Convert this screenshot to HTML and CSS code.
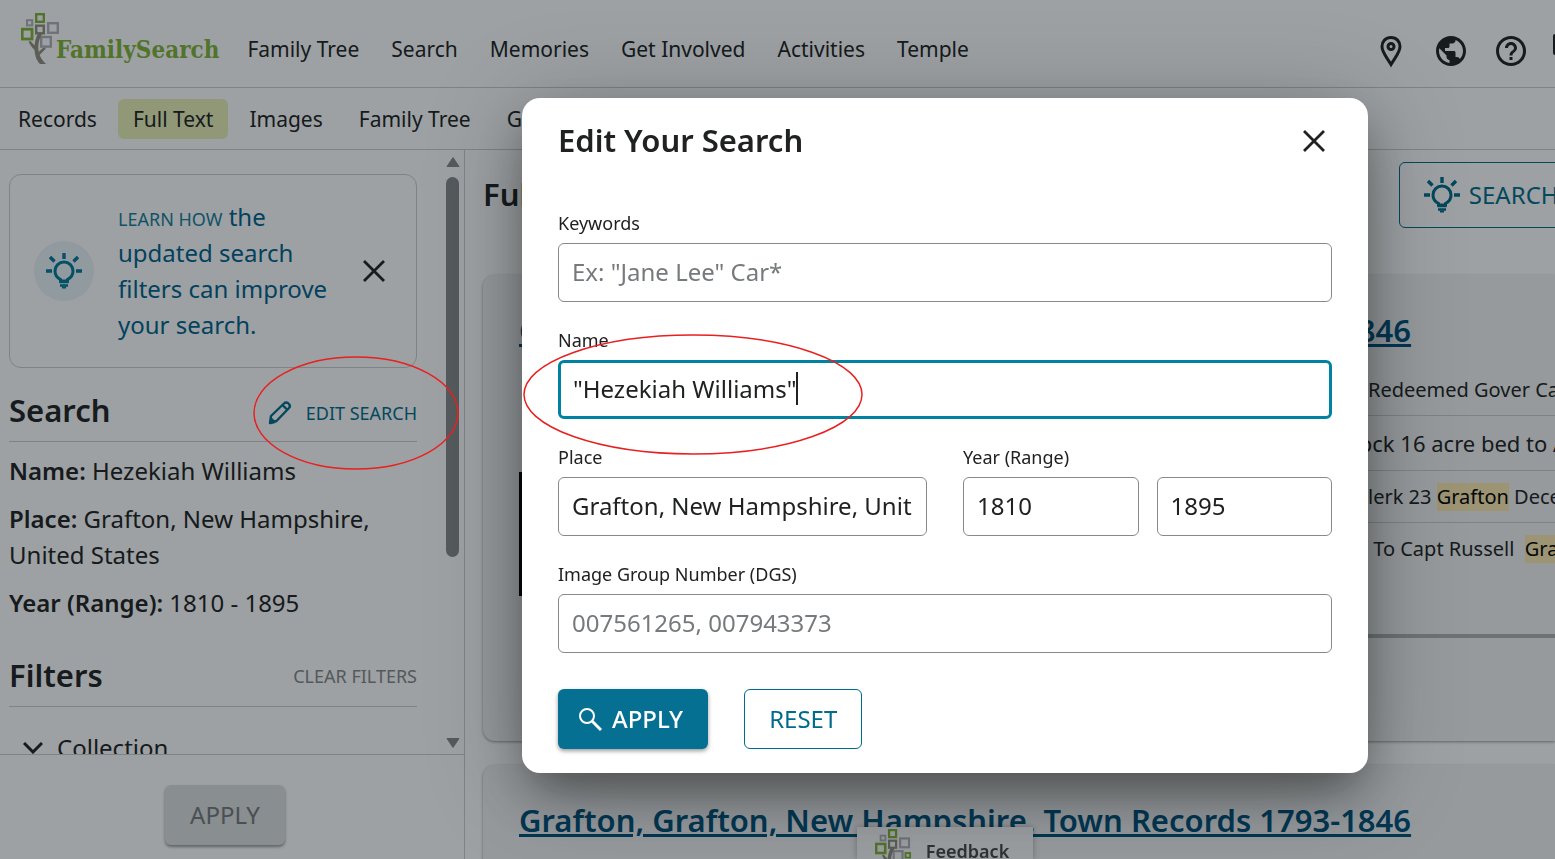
FILE: index.html
```html
<!DOCTYPE html>
<html lang="en">
<head>
  <meta charset="UTF-8">
  <meta name="viewport" content="width=device-width, initial-scale=1.0">
  <title>Full Text Search - FamilySearch</title>
  <link rel="stylesheet" href="styles.css">
</head>
<body>
  <!-- shared icons -->
  <svg class="sprite" aria-hidden="true">
    <symbol id="icon-tree" viewBox="0 0 40 52">
      <g fill="none" stroke-width="2.400">
        <rect x="15.200" y="1.200" width="7.600" height="7.600" stroke="#82b336"/>
        <rect x="6" y="7.200" width="5.200" height="5.200" stroke="#b3b3b7" stroke-width="2"/>
        <rect x="15.200" y="12.700" width="7.600" height="7.600" stroke="#93907e"/>
        <rect x="27.200" y="10.200" width="9.600" height="9.600" stroke="#b3b3b7"/>
        <rect x="1.200" y="16.200" width="9.800" height="9.800" stroke="#82b336" stroke-width="2.800"/>
        <rect x="20.200" y="24" width="9.600" height="9.600" stroke="#b3b3b7"/>
      </g>
      <path d="M17 20.500h4.500c-4 6-5 13-3.500 19 1 5 3.500 8 7 11.500h-6c-4-4-5-9-5.500-14-2-2-4.500-5-6-8.500l2-.5 4 4.500c.5-4.500 1.500-8.500 3.500-12zM18 38.500l4-3.500 2.500-.5v1.500l-6 6z" fill="#93907e"/>
    </symbol>
    <symbol id="icon-bulb" viewBox="0 0 36 36">
      <g fill="none" stroke="currentColor" stroke-width="3">
        <path d="M18 0v6M0 18h6M30 18h6M4 4l4.500 4.500M32 4l-4.500 4.500" stroke-width="3.400"/>
        <path d="M14.500 28v-1.500c-3-1.500-5.500-4.500-5.500-8.500a9 9 0 0 1 18 0c0 4-2.500 7-5.500 8.500V28z"/>
        <path d="M13.500 29h9M14 32.500h8" stroke-width="2.400"/>
        <path d="M16 34.500h4" stroke-width="2"/>
      </g>
    </symbol>
    <symbol id="icon-close" viewBox="0 0 24 24">
      <path d="M2 2l20 20M22 2L2 22" fill="none" stroke="currentColor" stroke-width="2.800"/>
    </symbol>
  </svg>

  <div class="app">
    <header class="header">
      <a class="logo" href="#" aria-label="FamilySearch">
        <svg class="logo-tree"><use href="#icon-tree"/></svg>
        <span class="logo-text">FamilySearch</span>
      </a>
      <nav class="main-nav">
        <a href="#">Family Tree</a>
        <a href="#">Search</a>
        <a href="#">Memories</a>
        <a href="#">Get Involved</a>
        <a href="#">Activities</a>
        <a href="#">Temple</a>
      </nav>
      <div class="header-icons">
        <button class="icon-btn" aria-label="Location">
          <svg viewBox="0 0 36 36" fill="none" stroke="currentColor" stroke-width="3"><path d="M18 4.500c-5.500 0-9 4-9 9 0 6 5 11 9 18 4-7 9-12 9-18 0-5-3.500-9-9-9z"/><circle cx="18" cy="13.500" r="3"/></svg>
        </button>
        <button class="icon-btn" aria-label="Language">
          <svg viewBox="0 0 24 24" fill="currentColor"><path d="M12 2C6.480 2 2 6.480 2 12s4.480 10 10 10 10-4.480 10-10S17.520 2 12 2zm-1 17.930c-3.950-.49-7-3.850-7-7.930 0-.62.080-1.210.21-1.790L9 15v1c0 1.100.9 2 2 2v1.930zm6.900-2.540c-.26-.81-1-1.390-1.900-1.390h-1v-3c0-.55-.45-1-1-1H8v-2h2c.55 0 1-.45 1-1V7h2c1.100 0 2-.9 2-2v-.41c2.930 1.190 5 4.060 5 7.410 0 2.080-.8 3.970-2.100 5.390z"/></svg>
        </button>
        <button class="icon-btn" aria-label="Help">
          <svg viewBox="0 0 24 24" fill="currentColor"><path d="M11 18h2v-2h-2v2zm1-16C6.480 2 2 6.480 2 12s4.480 10 10 10 10-4.480 10-10S17.520 2 12 2zm0 18c-4.410 0-8-3.590-8-8s3.590-8 8-8 8 3.590 8 8-3.590 8-8 8zm0-14c-2.210 0-4 1.790-4 4h2c0-1.100.9-2 2-2s2 .9 2 2c0 2-3 1.750-3 5h2c0-2.250 3-2.500 3-5 0-2.210-1.790-4-4-4z"/></svg>
        </button>
        <button class="icon-btn" aria-label="Messages">
          <svg viewBox="0 0 36 36" fill="currentColor"><path d="M2 1h32v21H2a2 2 0 0 1-2-2V3a2 2 0 0 1 2-2z"/></svg>
        </button>
      </div>
    </header>

    <nav class="sub-nav">
      <a href="#">Records</a>
      <a class="active" href="#">Full Text</a>
      <a href="#">Images</a>
      <a href="#">Family Tree</a>
      <a href="#">Genealogies</a>
    </nav>

    <div class="content">
      <aside class="sidebar">
        <div class="sidebar-scroll">
          <div class="sidebar-body">
            <div class="notice">
              <span class="notice-icon"><svg class="bulb"><use href="#icon-bulb"/></svg></span>
              <p><a href="#">LEARN HOW</a> the updated search filters can improve your search.</p>
              <button class="icon-btn" aria-label="Dismiss"><svg class="close"><use href="#icon-close"/></svg></button>
            </div>

            <div class="section-head">
              <h2>Search</h2>
              <button class="text-btn">
                <svg viewBox="0 0 24 24" fill="none" stroke="currentColor" stroke-width="2.400" stroke-linejoin="round"><path d="M2 22l1-7L16 2.500c1.500-1.500 3.500-1 4.500 0s2 3 .5 4.500L8.500 20zM14.500 4l5 5M2.500 22l1-4 3 3z"/></svg>
                EDIT SEARCH
              </button>
            </div>
            <p class="term"><strong>Name:</strong> Hezekiah Williams</p>
            <p class="term"><strong>Place:</strong> Grafton, New Hampshire, United States</p>
            <p class="term"><strong>Year (Range):</strong> 1810 - 1895</p>

            <div class="section-head filters">
              <h2>Filters</h2>
              <button class="text-btn" disabled>CLEAR FILTERS</button>
            </div>
            <button class="filter">
              <svg viewBox="0 0 20 12" fill="none" stroke="currentColor" stroke-width="3"><path d="M1 1l9 9 9-9"/></svg>
              Collection
            </button>
          </div>
          <div class="scrollbar" aria-hidden="true">
            <svg viewBox="0 0 14 11"><path d="M7 1l6 9H1z"/></svg>
            <div class="track"><div class="thumb"></div></div>
            <svg viewBox="0 0 14 11"><path d="M7 10l6-9H1z"/></svg>
          </div>
        </div>
        <div class="sidebar-footer">
          <button class="btn" disabled>APPLY</button>
        </div>
      </aside>

      <main class="results">
        <div class="results-head">
          <h1>Full Text Search Results</h1>
          <button class="btn outline tips"><svg class="bulb"><use href="#icon-bulb"/></svg>SEARCH TIPS</button>
        </div>
        <article class="record">
          <h2><a href="#">Grafton, Grafton, New Hampshire. Town Records 1793-1846</a></h2>
          <div class="record-body">
            <div class="thumbnail"></div>
            <ul class="snippets">
              <li><span class="lead"></span>Redeemed Gover Cash</li>
              <li class="large"><span class="lead">St</span>ock 16 acre bed to Amos</li>
              <li><span class="lead">C</span>lerk 23 <mark>Grafton</mark> December</li>
              <li><span class="lead"></span> To Capt Russell  <mark>Grafton</mark></li>
            </ul>
          </div>
        </article>
        <article class="record">
          <h2><a href="#">Grafton, Grafton, New Hampshire. Town Records 1793-1846</a></h2>
        </article>
      </main>
    </div>

    <button class="feedback">
      <svg viewBox="0 0 40 52"><use href="#icon-tree"/><rect x="33" y="26" width="5" height="5" fill="none" stroke="#82b336" stroke-width="2"/></svg>
      Feedback
    </button>
  </div>

  <div class="overlay">
    <form class="modal" role="dialog" aria-labelledby="modal-title">
      <div class="modal-head">
        <h2 id="modal-title">Edit Your Search</h2>
        <button type="button" class="icon-btn" aria-label="Close"><svg class="close"><use href="#icon-close"/></svg></button>
      </div>
      <div class="field wide">
        <label for="keywords">Keywords</label>
        <input type="text" id="keywords" placeholder='Ex: "Jane Lee" Car*'>
      </div>
      <div class="field wide">
        <label for="name">Name</label>
        <div class="input-wrap">
          <input type="text" class="focused" id="name" value='"Hezekiah Williams"'>
          <span class="caret"></span>
        </div>
      </div>
      <div class="field">
        <label for="place">Place</label>
        <input type="text" id="place" value="Grafton, New Hampshire, United States">
      </div>
      <div class="field">
        <label for="year-from">Year (Range)</label>
        <div class="years">
          <input type="text" id="year-from" value="1810">
          <input type="text" id="year-to" value="1895" aria-label="Year to">
        </div>
      </div>
      <div class="field wide">
        <label for="dgs">Image Group Number (DGS)</label>
        <input type="text" id="dgs" placeholder="007561265, 007943373">
      </div>
      <div class="actions">
        <button type="button" class="btn primary">
          <svg viewBox="0 0 24 24" fill="none" stroke="currentColor"><circle cx="9" cy="9" r="7" stroke-width="2"/><path d="M14 14l9 9" stroke-width="3"/></svg>
          APPLY
        </button>
        <button type="button" class="btn outline">RESET</button>
      </div>
    </form>
  </div>

  <!-- red callouts -->
  <svg class="callout callout-edit" viewBox="0 0 206 114"><ellipse cx="103" cy="57" rx="102" ry="56"/></svg>
  <svg class="callout callout-name" viewBox="0 0 340 121"><ellipse cx="170" cy="60.500" rx="169" ry="59.500"/></svg>
</body>
</html>
```
FILE: styles.css
```css
* {
  box-sizing: border-box;
}
body {
  margin: 0;
  font-family: "Noto Sans", sans-serif;
  font-size: 24px;
  line-height: 36px;
  color: #202121;
  background-color: #fff;
  overflow: hidden;
}
h1, h2, p, ul {
  margin: 0;
}
h1, h2 {
  padding-bottom: 2px;
  font-size: 31px;
  font-weight: 600;
  line-height: 40px;
}
strong {
  font-weight: 600;
}
a {
  color: inherit;
  text-decoration: none;
}
button, input {
  font: inherit;
  color: inherit;
}
button {
  display: flex;
  align-items: center;
  justify-content: center;
  padding: 0;
  border: none;
  background: none;
  white-space: nowrap;
  cursor: pointer;
}
.sprite {
  display: none;
}
.app {
  display: flex;
  flex-direction: column;
  height: 100vh;
  overflow: hidden;
}

/* header */
.header {
  display: flex;
  align-items: center;
  flex: none;
  height: 88px;
  padding-left: 21px;
  border-bottom: 1px solid #cdcdcd;
}
.logo {
  display: flex;
  align-items: flex-end;
  height: 52px;
  margin-top: -10px;
}
.logo-tree {
  width: 40px;
  height: 52px;
}
.logo-text {
  margin-left: -5px;
  font-family: "DejaVu Serif Condensed", "DejaVu Serif", serif;
  font-size: 24px;
  font-weight: bold;
  line-height: 30px;
  color: #82b336;
}
.main-nav, .sub-nav {
  display: flex;
  font-size: 21px;
  white-space: nowrap;
}
.main-nav {
  gap: 32px;
  margin-left: 28px;
  padding-top: 10px;
}
.header-icons {
  display: flex;
  gap: 24px;
  flex: none;
  margin-left: auto;
  margin-right: -34px;
  padding-top: 15px;
}
.icon-btn {
  flex: none;
  width: 36px;
  height: 36px;
}
.icon-btn svg {
  width: 36px;
  height: 36px;
}
.icon-btn .close {
  width: 24px;
  height: 24px;
}
.sub-nav {
  align-items: center;
  flex: none;
  gap: 6px;
  height: 62px;
  padding-left: 3px;
  border-bottom: 1px solid #cdcdcd;
}
.sub-nav a {
  padding: 2px 15px;
  border-radius: 6px;
}
.sub-nav .active {
  background-color: #ebf0b7;
}

/* sidebar */
.content {
  display: flex;
  flex: 1;
  min-height: 0;
}
.sidebar {
  display: flex;
  flex-direction: column;
  flex: none;
  width: 465px;
  border-right: 1px solid #cdcdcd;
}
.sidebar-scroll {
  display: flex;
  flex: 1;
  min-height: 0;
  overflow: hidden;
}
.sidebar-body {
  flex: 1;
  padding: 24px 29px 0 9px;
}
.notice {
  display: flex;
  align-items: center;
  gap: 24px;
  padding: 24px;
  border: 1px solid #cdcdcd;
  border-radius: 12px;
  color: #005f8c;
}
.notice p {
  flex: 1;
}
.notice a {
  font-size: 18px;
  line-height: 24px;
  color: #177c9c;
}
.notice .icon-btn {
  color: #202121;
}
.notice-icon {
  display: flex;
  align-items: center;
  justify-content: center;
  flex: none;
  width: 60px;
  height: 60px;
  border-radius: 50%;
  background-color: #e9f3f8;
  color: #00799b;
}
.bulb {
  flex: none;
  width: 36px;
  height: 36px;
}
.section-head {
  display: flex;
  align-items: center;
  justify-content: space-between;
  margin: 22px 0 11px;
  padding-bottom: 9px;
  border-bottom: 1px solid #cdcdcd;
}
.section-head.filters {
  margin: 34px 0 23px;
}
.text-btn {
  gap: 14px;
  padding-top: 4px;
  font-size: 18px;
  color: #006b8c;
}
.text-btn:disabled {
  padding-top: 0;
  color: #858788;
}
.text-btn svg {
  width: 24px;
  height: 24px;
}
.term {
  margin-bottom: 12px;
}
.filter {
  gap: 14px;
  padding-left: 14px;
}
.filter svg {
  width: 20px;
  height: 12px;
}
.scrollbar {
  display: flex;
  flex-direction: column;
  gap: 9px;
  width: 14px;
  margin: 6px 4px 5px 0;
  fill: #87898b;
  stroke: #87898b;
  stroke-linejoin: round;
}
.scrollbar svg {
  width: 14px;
  height: 12px;
}
.track {
  flex: 1;
}
.thumb {
  width: 13px;
  height: 69%;
  border-radius: 7px;
  background-color: #87898b;
}
.sidebar-footer {
  display: flex;
  align-items: center;
  justify-content: center;
  height: 105px;
  padding: 16px 14px 0 0;
  border-top: 1px solid #cdcdcd;
}
.btn {
  gap: 12px;
  height: 60px;
  padding: 0 24px;
  border: 1px solid transparent;
  border-radius: 6px;
}
.btn:disabled {
  background-color: #dedfe0;
  color: #767879;
  box-shadow: 0 2px 3px rgba(0, 0, 0, 0.4);
}
.btn.primary {
  padding: 0 24px 0 19px;
  gap: 10px;
  background-color: #057092;
  color: #fff;
  font-weight: 500;
  box-shadow: 0 2px 4px rgba(0, 0, 0, 0.4);
}
.btn.primary svg {
  width: 24px;
  height: 24px;
}
.btn.outline {
  border-color: #006b8c;
  color: #006b8c;
}

/* results */
.results {
  flex: 1;
  min-width: 0;
  padding: 12px 0 0 18px;
  overflow: hidden;
}
.results-head {
  display: flex;
  align-items: center;
  justify-content: space-between;
  margin-bottom: 47px;
}
.results-head h1 {
  white-space: nowrap;
}
.btn.tips {
  flex: none;
  gap: 9px;
  height: 66px;
  margin-right: -84px;
}
.record {
  min-height: 466px;
  margin-bottom: 24px;
  padding-top: 35px;
  border-radius: 12px 0 0 12px;
  background-color: #f3f3f4;
  box-shadow: 0 1px 3px rgba(0, 0, 0, 0.4);
}
.record h2 {
  padding-left: 36px;
  white-space: nowrap;
}
.record h2 a {
  color: #00507a;
  text-decoration: underline;
}
.record-body {
  display: flex;
  align-items: flex-end;
  justify-content: space-between;
  height: 286px;
  padding-left: 36px;
}
.thumbnail {
  width: 130px;
  height: 124px;
  margin-bottom: 42px;
  background-color: #000;
}
.snippets {
  align-self: stretch;
  width: 220px;
  padding: 12px 0 0;
  border-bottom: 4px solid #b0b2b3;
  list-style: none;
  font-size: 20px;
}
.snippets li {
  display: flex;
  align-items: center;
  height: 52px;
  border-bottom: 1px solid #cdcdcd;
  white-space: pre;
}
.snippets li:last-child {
  border-bottom: none;
}
.snippets .large {
  height: 55px;
  font-size: 22px;
}
.snippets .lead {
  flex: none;
  width: 33px;
  text-align: right;
}
.snippets .large .lead {
  width: 24px;
}
mark {
  background-color: #ffe9af;
  line-height: 28px;
}
.feedback {
  position: fixed;
  bottom: 0;
  left: 857px;
  align-items: flex-start;
  gap: 14px;
  width: 176px;
  height: 32px;
  padding-right: 6px;
  overflow: hidden;
  background-color: #fafafb;
  color: #474747;
  font-size: 18px;
  font-weight: 600;
  line-height: 48px;
  box-shadow: 0 0 6px rgba(0, 0, 0, 0.3);
}
.feedback svg {
  flex: none;
  width: 37px;
  height: 48px;
  margin-top: 2px;
}

/* modal */
.overlay {
  position: fixed;
  inset: 0;
  padding: 98px 187px 0 522px;
  background-color: rgba(10, 20, 25, 0.4);
}
.modal {
  display: grid;
  grid-template-columns: 1fr 1fr;
  gap: 24px 36px;
  padding: 22px 36px 24px;
  border-radius: 18px;
  background-color: #fff;
  box-shadow: 0 24px 48px -8px rgba(0, 0, 0, 0.4), 0 12px 96px rgba(0, 0, 0, 0.25);
}
.modal-head {
  display: flex;
  justify-content: space-between;
  align-items: center;
  grid-column: span 2;
  margin-bottom: 24px;
}
.field {
  min-width: 0;
}
.wide {
  grid-column: span 2;
}
.field label {
  display: block;
  margin-bottom: 6px;
  font-size: 18px;
  line-height: 27px;
}
.field input {
  display: block;
  width: 100%;
  height: 59px;
  padding: 0 14px 2px 13px;
  border: 1px solid #878a8c;
  border-radius: 6px;
  background-color: #fff;
}
.field + .field {
  margin-top: 1px;
}
.field input::placeholder {
  color: #767a7c;
  opacity: 1;
}
.field input.focused {
  padding: 0 12px 2px;
  border: 3px solid #0083a3;
}
.input-wrap {
  position: relative;
}
.caret {
  position: absolute;
  top: 12px;
  left: 238px;
  width: 2px;
  height: 33px;
  background-color: #202121;
}
.years {
  display: grid;
  grid-template-columns: 1fr 1fr;
  gap: 18px;
}
.actions {
  display: flex;
  grid-column: span 2;
  gap: 36px;
  margin-top: 12px;
}

.callout {
  position: fixed;
  fill: none;
  stroke: #e8201f;
  stroke-width: 1.5;
  pointer-events: none;
}
.callout-edit {
  top: 356px;
  left: 253px;
  width: 206px;
  height: 114px;
}
.callout-name {
  top: 334px;
  left: 523px;
  width: 340px;
  height: 121px;
}
```
